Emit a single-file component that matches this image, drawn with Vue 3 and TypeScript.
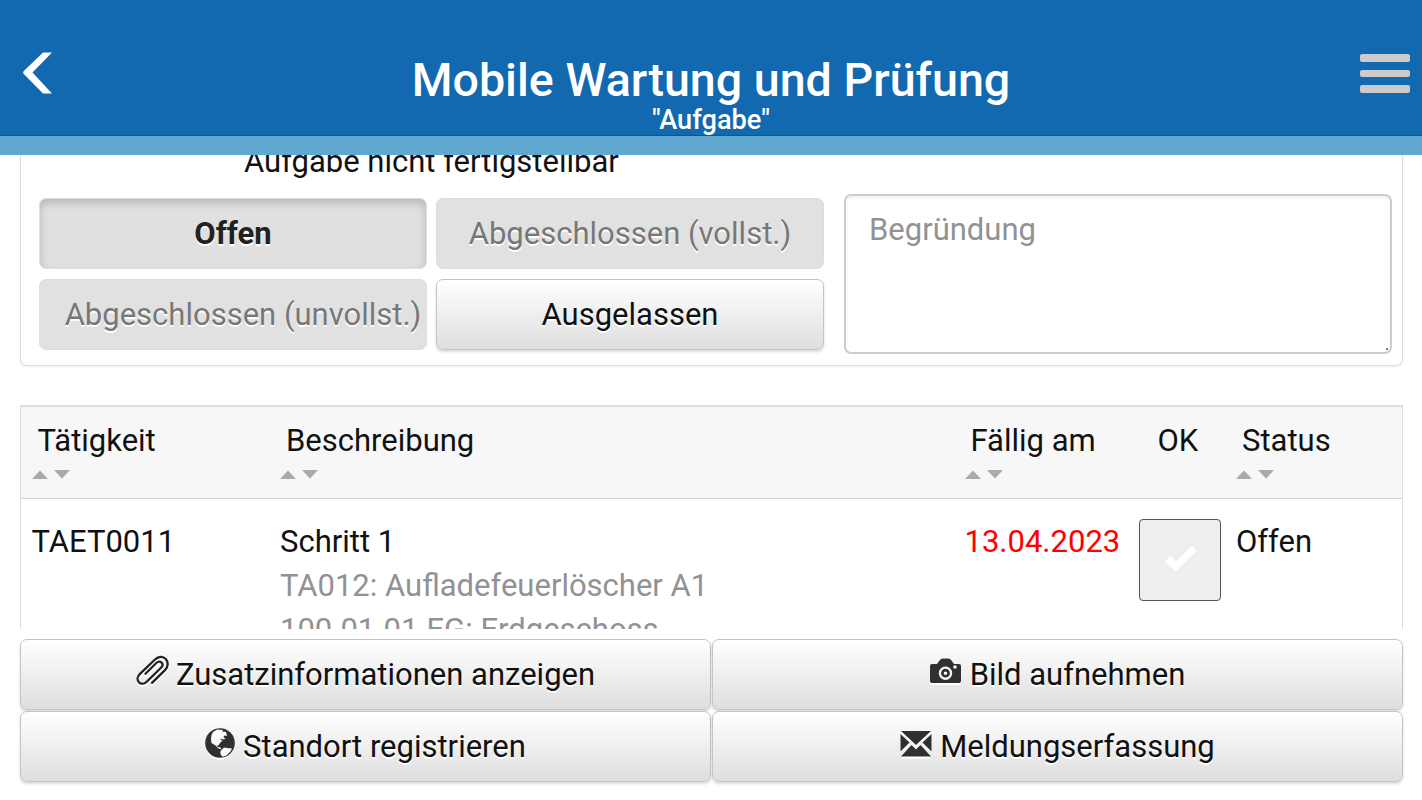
<script setup lang="ts">
import { ref } from 'vue'

interface StatusOption {
  label: string
  state: 'active' | 'disabled' | 'normal'
}

interface Action {
  label: string
  icon: 'clip' | 'camera' | 'globe' | 'mail'
}

const statusOptions: StatusOption[] = [
  { label: 'Offen', state: 'active' },
  { label: 'Abgeschlossen (vollst.)', state: 'disabled' },
  { label: 'Abgeschlossen (unvollst.)', state: 'disabled' },
  { label: 'Ausgelassen', state: 'normal' },
]

const columns = [
  { label: 'Tätigkeit', sortable: true },
  { label: 'Beschreibung', sortable: true },
  { label: 'Fällig am', sortable: true },
  { label: 'OK', sortable: false },
  { label: 'Status', sortable: true },
]

const actions: Action[] = [
  { label: 'Zusatzinformationen anzeigen', icon: 'clip' },
  { label: 'Bild aufnehmen', icon: 'camera' },
  { label: 'Standort registrieren', icon: 'globe' },
  { label: 'Meldungserfassung', icon: 'mail' },
]

const reason = ref('')
</script>

<template>
  <div class="app">
    <header class="header">
      <button class="back" aria-label="Zurück">
        <svg width="30" height="42" viewBox="0 0 30 42">
          <path d="M20 0.500h9L9.500 20.500 29 41.500h-9L.8 22q-1.300-1.500 0-3z" fill="#fff" />
        </svg>
      </button>
      <div class="titles">
        <h1>Mobile Wartung und Prüfung</h1>
        <h2>"Aufgabe"</h2>
      </div>
      <button class="menu" aria-label="Menü">
        <span></span>
        <span></span>
        <span></span>
      </button>
    </header>

    <main class="content">
      <section class="panel">
        <p class="hint">Aufgabe nicht fertigstellbar</p>
        <div class="panel-body">
          <div class="options">
            <button
              v-for="option in statusOptions"
              :key="option.label"
              class="btn"
              :class="option.state"
              :disabled="option.state === 'disabled'"
            >
              <span>{{ option.label }}</span>
            </button>
          </div>
          <div class="reason-wrap">
            <textarea v-model="reason" class="reason" placeholder="Begründung"></textarea>
            <i class="grip"></i>
          </div>
        </div>
      </section>

      <section class="table">
        <div class="row head">
          <div v-for="column in columns" :key="column.label" class="cell">
            <span class="label">{{ column.label }}</span>
            <svg v-if="column.sortable" class="sort" width="38" height="9" viewBox="0 0 38 9">
              <path d="M0 9 8 .5 16 9zM22 0h16l-8 8.5z" fill="#aaa" />
            </svg>
          </div>
        </div>
        <div class="row">
          <div class="cell code">TAET0011</div>
          <div class="cell description">
            <div class="step">Schritt 1</div>
            <div class="muted object">TA012: Aufladefeuerlöscher A1</div>
            <div class="muted place">100.01.01.EG: Erdgeschoss</div>
          </div>
          <div class="cell due">13.04.2023</div>
          <div class="cell">
            <button class="check" aria-label="OK">
              <svg width="32" height="27" viewBox="0 0 32 27">
                <path d="M0 16.5 5.5 11l5.7 5.5L27 .5 32 5.5 11 26.5z" fill="#fff" />
              </svg>
            </button>
          </div>
          <div class="cell">Offen</div>
        </div>
      </section>
    </main>

    <footer class="footer">
      <button v-for="action in actions" :key="action.icon" class="btn normal" :class="action.icon">
        <svg v-if="action.icon === 'clip'" class="icon" width="33" height="31" viewBox="0 0 33 31">
          <path
            d="M16 27.800 29 15.200C32.300 12 32.500 7 29.800 4 27 1 22.500 1.200 19 4.500L4 18.800C1.200 21.500.8 25 3 27.300 5.200 29.400 8.500 29 11 26.500L25 12.800C26.800 11 27 9 25.600 7.600 24 6.200 22 6.500 20.300 8L9.500 18.800"
            fill="none"
            stroke="#222"
            stroke-width="2.3"
            stroke-linecap="round"
          />
        </svg>
        <svg v-else-if="action.icon === 'camera'" class="icon" width="32" height="31" viewBox="0 0 32 31">
          <path
            fill-rule="evenodd"
            d="M2 6h5l2.500-3.500Q10.800.5 13 .5h5q2.500 0 3.500 2L24 6h5q2 0 2 2v15q0 2-2 2H2q-2 0-2-2V8q0-2 2-2zM15.500 8.500a6.700 6.700 0 1 0 0 13.400 6.700 6.700 0 0 0 0-13.400zM23.500 7.500v3h3v-3z"
            fill="#303030"
          />
          <circle cx="15.500" cy="15.200" r="3.100" fill="none" stroke="#303030" stroke-width="2.600" />
        </svg>
        <svg v-else-if="action.icon === 'globe'" class="icon" width="30" height="31" viewBox="0 0 30 31">
          <circle cx="15" cy="15" r="14.800" fill="#303030" />
          <path
            d="M8 4 12 1.500l6 .5-1 1.500 4 .5 1 4-2.500-.5-1 1.500 2 2-3 .5-1.500-1-.5 1.500 2 .5-2.500 2.500-1.500 2.500h-2l1.500 1.500 2.500.5 1 1.800-3-.8-3-3-4-2.500L6 11l.500-4zM15.500 23l3.500-3.500 3 .5 5 .500-1.500 3-4 4-4 1.200-2-2.500z"
            fill="#fafafa"
          />
        </svg>
        <svg v-else class="icon" width="32" height="31" viewBox="0 0 32 31">
          <path
            d="M1 2h30L16 16zM.5 5 9.500 13.500.5 22.500zM31.500 5l-9 8.500 9 9zM1 27.500 11.500 16l4.500 4.500 4.500-4.500L31 27.500z"
            fill="#303030"
          />
        </svg>
        <span>{{ action.label }}</span>
      </button>
    </footer>
  </div>
</template>

<style>
body {
  margin: 0;
  background: #fff;
}
</style>

<style scoped>
.app {
  display: flex;
  flex-direction: column;
  height: 800px;
  overflow: hidden;
  background: #fff;
  color: #111;
  font-family: Roboto, sans-serif;
  font-size: 31px;
}

button,
textarea {
  box-sizing: border-box;
  margin: 0;
  font: inherit;
  color: inherit;
}

/* Header */
.header {
  box-sizing: border-box;
  flex: none;
  display: flex;
  justify-content: space-between;
  height: 155px;
  padding: 52px 12px 0 23px;
  background: #1269b0;
  border-bottom: 19px solid #5fa8d0;
  box-shadow: inset 0 -1px #005aa8;
}

.back,
.menu {
  height: 42px;
  padding: 0;
  border: 0;
  background: none;
}

.back {
  width: 39px;
}

.back svg {
  display: block;
}

.menu {
  display: flex;
  flex-direction: column;
  gap: 8px;
  width: 50px;
  padding-top: 2px;
}

.menu span {
  width: 50px;
  height: 7.5px;
  border-radius: 2px;
  background: #cbcbcd;
}

.titles {
  padding-top: 1px;
  color: #fff;
  text-align: center;
  white-space: nowrap;
}

h1,
h2 {
  margin: 0;
  font-weight: 500;
}

h1 {
  font-size: 46.6px;
  line-height: 54px;
}

h2 {
  font-size: 27.2px;
  line-height: 26px;
}

/* Scrolled content */
.content {
  flex: none;
  height: 474px;
  padding: 0 19px 0 20px;
  overflow: hidden;
}

.panel {
  box-sizing: border-box;
  height: 211px;
  padding: 0 11px 0 18px;
  border: 1px solid #ddd;
  border-top: 0;
  border-radius: 0 0 7px 7px;
  box-shadow: 0 1px 3px rgba(0, 0, 0, 0.08);
}

.hint {
  height: 39px;
  margin: 0 0 0 205px;
  line-height: 14px;
  white-space: nowrap;
}

.panel-body {
  display: flex;
  gap: 20px;
}

.options {
  display: grid;
  grid-template-columns: 388px 388px;
  grid-auto-rows: 71px;
  gap: 10px 9px;
  padding-top: 4px;
}

.btn {
  display: flex;
  align-items: center;
  justify-content: center;
  padding: 0;
  border: 1px solid #ddd;
  border-radius: 7px;
  text-shadow: 0 2px 0 #fff;
  white-space: nowrap;
}

.btn.active {
  background: #e0e0e0;
  color: #222;
  font-weight: 700;
  box-shadow: inset 0 4px 9px rgba(0, 0, 0, 0.18);
}

.btn.disabled {
  background: #e1e1e1;
  color: #777;
}

.btn.disabled:nth-child(3) {
  padding-left: 20px;
}

.btn.normal {
  border-color: #c4c4c4;
  background: linear-gradient(#fff, #dedede);
  box-shadow: 0 2px 3px rgba(0, 0, 0, 0.15);
}

.reason-wrap {
  position: relative;
}

.reason {
  display: block;
  width: 548px;
  height: 160px;
  padding: 16px 23px;
  border: 2px solid #ccc;
  border-radius: 7px;
  outline: 0;
  box-shadow: inset 0 2px 3px rgba(0, 0, 0, 0.06);
  line-height: 36px;
  resize: none;
}

.reason::placeholder {
  color: #929292;
  opacity: 1;
}

/* Resize handle */
.grip {
  position: absolute;
  right: 4px;
  bottom: 4px;
  width: 2px;
  height: 2px;
  background: #777;
}

/* Task table */
.table {
  margin-top: 39px;
  border: 2px solid #ddd;
  border-width: 2px 1px 0;
}

.row {
  display: grid;
  grid-template-columns: 248.5px 684.5px 174px 97.5px 1fr;
  padding: 21px 0 0 10.5px;
  white-space: nowrap;
}

.cell {
  line-height: 44px;
}

.head {
  box-sizing: border-box;
  height: 92px;
  padding-top: 14px;
  border-bottom: 1px solid #d4d4d4;
  background: #f7f7f7;
}

.head .label {
  display: block;
  margin-left: 6px;
  line-height: 40px;
}

.head .cell:nth-child(4) .label {
  margin-left: 19px;
}

.sort {
  display: block;
  margin-top: 9px;
}

.muted {
  color: #929292;
}

.due {
  color: #f00;
}

.check {
  display: flex;
  align-items: center;
  justify-content: center;
  width: 82px;
  height: 82px;
  margin-top: -1px;
  padding: 0 0 3px 2px;
  border: 1px solid #555;
  border-radius: 4px;
  background: #eee;
}

/* Bottom actions */
.footer {
  flex: none;
  display: grid;
  grid-template-columns: 1fr 1fr;
  grid-auto-rows: 71px;
  gap: 1px;
  margin: 10px 19px 0 20px;
}

.icon {
  margin-right: 8px;
  filter: drop-shadow(0 2px 0 #fff);
}

.clip .icon {
  margin: 0 7px 8px 0;
}

.camera .icon {
  margin-bottom: 3px;
}

.globe .icon {
  margin-bottom: 6px;
}

.mail .icon {
  margin-bottom: 5px;
}
</style>
